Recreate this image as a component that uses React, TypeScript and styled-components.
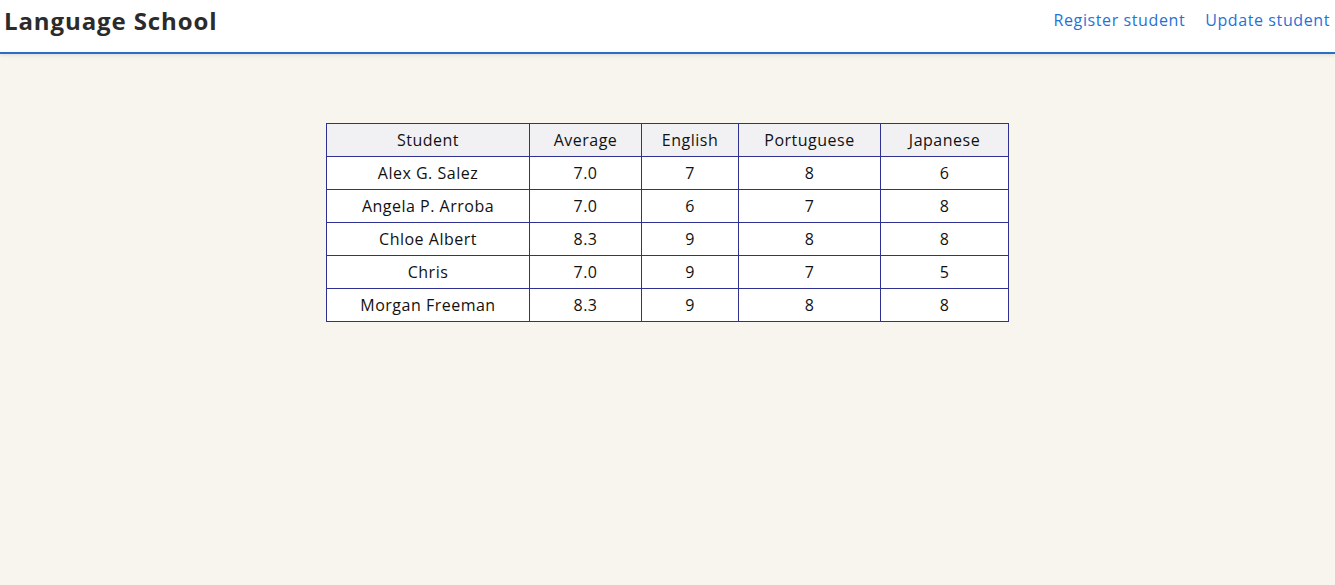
import React from "react";
import styled, { createGlobalStyle } from "styled-components";

const Global = createGlobalStyle`
  html, body { margin: 0; padding: 0; }
  body {
    background: #f8f5ef;
    font-family: "Open Sans", "Noto Sans", sans-serif;
    color: #222;
  }
`;

const Header = styled.header`
  height: 52px;
  background: #ffffff;
  border-bottom: 2px solid #2a6fc4;
  box-shadow: 0 2px 3px rgba(0, 0, 0, 0.08);
  display: flex;
  align-items: center;
  justify-content: space-between;
  padding: 0 5px 0 4px;
`;

const Title = styled.h1`
  margin: 0;
  margin-top: -12px;
  font-size: 24px;
  font-weight: 700;
  color: #2b2b2b;
  letter-spacing: 0.9px;
`;

const Nav = styled.nav`
  display: flex;
  gap: 20px;
  margin-top: -12px;
`;

const NavLink = styled.a`
  color: #1f72d6;
  text-decoration: none;
  font-size: 16px;
  letter-spacing: 0.6px;
`;

const Main = styled.main`
  display: flex;
  justify-content: center;
  padding-top: 69px;
`;

const Table = styled.table`
  border-collapse: collapse;
  background: #ffffff;
  font-size: 16px;
  letter-spacing: 0.5px;
`;

const Th = styled.th<{ $w: number }>`
  width: ${(p) => p.$w}px;
  box-sizing: border-box;
  height: 33px;
  padding: 0 0 1px;
  border: 1px solid #2e3192;
  background: #f1f1f4;
  font-weight: 400;
  text-align: center;
  color: #111;
`;

const Td = styled.td`
  height: 32px;
  padding: 0;
  border: 1px solid #2e3192;
  text-align: center;
  color: #111;
`;

const cols = [
  { name: "Student", w: 203 },
  { name: "Average", w: 112 },
  { name: "English", w: 97 },
  { name: "Portuguese", w: 142 },
  { name: "Japanese", w: 128 },
];

const rows = [
  ["Alex G. Salez", "7.0", "7", "8", "6"],
  ["Angela P. Arroba", "7.0", "6", "7", "8"],
  ["Chloe Albert", "8.3", "9", "8", "8"],
  ["Chris", "7.0", "9", "7", "5"],
  ["Morgan Freeman", "8.3", "9", "8", "8"],
];

export default function App() {
  return (
    <>
      <Global />
      <Header>
        <Title>Language School</Title>
        <Nav>
          <NavLink href="#">Register student</NavLink>
          <NavLink href="#">Update student</NavLink>
        </Nav>
      </Header>
      <Main>
        <Table>
          <thead>
            <tr>
              {cols.map((c) => (
                <Th key={c.name} $w={c.w}>
                  {c.name}
                </Th>
              ))}
            </tr>
          </thead>
          <tbody>
            {rows.map((r) => (
              <tr key={r[0]}>
                {r.map((v, i) => (
                  <Td key={i}>{v}</Td>
                ))}
              </tr>
            ))}
          </tbody>
        </Table>
      </Main>
    </>
  );
}
